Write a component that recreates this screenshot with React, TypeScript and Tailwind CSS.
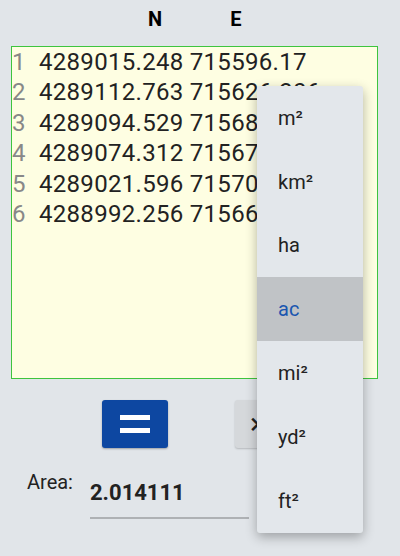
const rows = [
  ['4289015.248', '715596.17'],
  ['4289112.763', '715626.306'],
  ['4289094.529', '715681.112'],
  ['4289074.312', '715672.845'],
  ['4289021.596', '715703.201'],
  ['4288992.256', '715664.918'],
]

const units = ['m²', 'km²', 'ha', 'ac', 'mi²', 'yd²', 'ft²']

export default function App() {
  return (
    <div
      className="relative h-[556px] w-[400px] overflow-hidden bg-[#e1e5e9] text-[#222]"
      style={{ fontFamily: 'Roboto, "Noto Sans", sans-serif' }}
    >
      {/* column headers */}
      <div className="flex h-[46px] pt-[7px] text-[20px] font-bold leading-[24px] text-black">
        <span className="ml-[148px]">N</span>
        <span className="ml-[68px]">E</span>
      </div>

      {/* coordinate list */}
      <div className="ml-[11px] h-[333px] w-[367px] overflow-hidden border-[1.5px] border-[#3ec43e] bg-[#fefee2]">
        {rows.map(([n, e], i) => (
          <div key={i} className="flex h-[30.4px] whitespace-nowrap text-[24px] leading-[30.4px] tracking-[0.3px]">
            <span className="w-[27px] text-[#888]">{i + 1}</span>
            <span>
              {n} {e}
            </span>
          </div>
        ))}
      </div>

      {/* buttons */}
      <div className="mt-[21px] flex h-[48px]">
        <button className="ml-[102px] flex h-[48px] w-[66px] flex-col items-center justify-center gap-[8px] rounded-[3px] bg-[#0d47a1] shadow-[0_1px_2px_rgba(0,0,0,0.3)]">
          <span className="block h-[5px] w-[30px] bg-white" />
          <span className="block h-[5px] w-[30px] bg-white" />
        </button>
        <button className="ml-[67px] flex h-[48px] w-[66px] items-center rounded-[3px] bg-[#d5d8db] pl-[15px] text-[30px] leading-none text-[#222] shadow-[0_1px_2px_rgba(0,0,0,0.2)]">
          ×
        </button>
      </div>

      {/* area */}
      <div className="mt-[22px] flex items-start">
        <span className="ml-[27px] w-[63px] text-[20px] leading-[24px]">Area:</span>
        <div className="mt-[10px] h-[39px] w-[159px] border-b-[2px] border-[#aeb1b4] text-[22px] font-bold leading-[26px]">
          2.014111
        </div>
      </div>

      {/* unit menu */}
      <div className="absolute left-[257px] top-[86px] w-[106px] rounded-[3px] bg-[#e3e7eb] shadow-[0_4px_12px_rgba(0,0,0,0.3)]">
        {units.map((u) => (
          <div
            key={u}
            className={
              u === 'ac'
                ? 'flex h-[63.8px] items-center bg-[#c0c3c6] pl-[21px] text-[20px] text-[#1a56b0]'
                : 'flex h-[63.8px] items-center pl-[21px] text-[20px] text-[#222]'
            }
          >
            {u}
          </div>
        ))}
      </div>
    </div>
  )
}
